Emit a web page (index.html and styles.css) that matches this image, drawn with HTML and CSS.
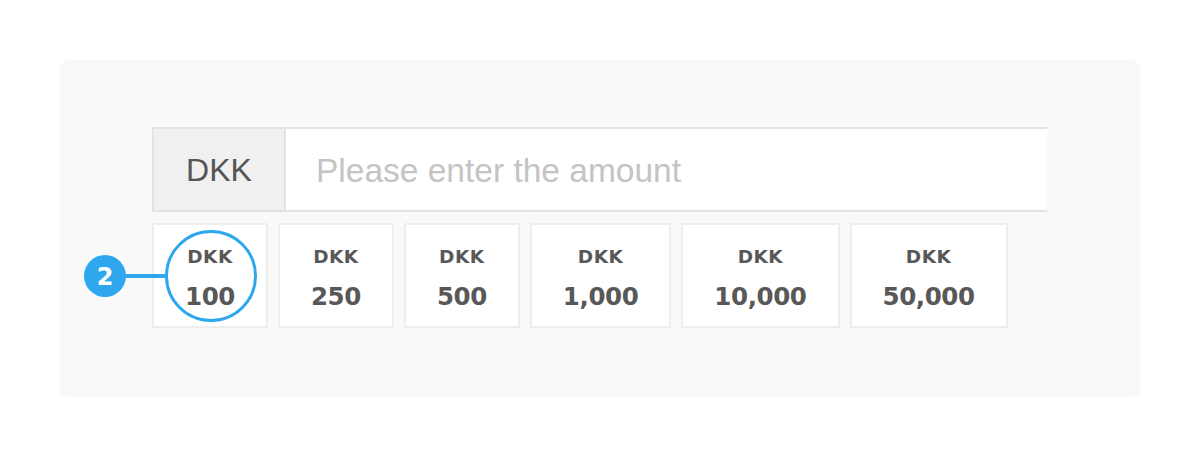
FILE: index.html
```html
<!DOCTYPE html>
<html lang="en">
<head>
<meta charset="utf-8">
<title>Amount</title>
<link rel="stylesheet" href="styles.css">
</head>
<body>
<div class="panel">
  <div class="input-group">
    <div class="currency">DKK</div>
    <div class="amount-input">Please enter the amount</div>
  </div>
  <div class="presets">
    <div class="preset"><span class="cur">DKK</span><span class="val">100</span></div>
    <div class="preset"><span class="cur">DKK</span><span class="val">250</span></div>
    <div class="preset"><span class="cur">DKK</span><span class="val">500</span></div>
    <div class="preset"><span class="cur">DKK</span><span class="val">1,000</span></div>
    <div class="preset"><span class="cur">DKK</span><span class="val">10,000</span></div>
    <div class="preset"><span class="cur">DKK</span><span class="val">50,000</span></div>
    <svg class="callout" width="190" height="100" viewBox="0 0 190 100">
      <line x1="44" y1="48" x2="86" y2="48" stroke="#2ea7ef" stroke-width="4"/>
      <circle cx="25" cy="48" r="21" fill="#2ea7ef"/>
      <text x="25" y="57" text-anchor="middle" class="badge-num">2</text>
      <circle cx="131" cy="48" r="44.5" fill="none" stroke="#2ea7ef" stroke-width="3"/>
    </svg>
  </div>
</div>
</body>
</html>
```
FILE: styles.css
```css
html, body {
  margin: 0;
  padding: 0;
  background: #ffffff;
}
body {
  width: 1200px;
  height: 457px;
  overflow: hidden;
  font-family: "Liberation Sans", Arial, sans-serif;
}
.panel {
  box-sizing: border-box;
  margin: 60px 0 0 60px;
  width: 1080px;
  height: 337px;
  background: #f9f9f9;
  border-radius: 8px;
  padding: 67px 0 0 92px;
}
.input-group {
  display: flex;
  width: 895px;
  height: 85px;
  box-sizing: border-box;
  border-top: 2px solid #e3e3e3;
  border-bottom: 2px solid #e3e3e3;
  background: #ffffff;
}
.currency {
  box-sizing: border-box;
  width: 134px;
  background: #f0f0f0;
  border-left: 2px solid #e3e3e3;
  border-right: 2px solid #e3e3e3;
  display: flex;
  align-items: center;
  justify-content: center;
  font-size: 32px;
  color: #555555;
  padding-top: 2px;
}
.amount-input {
  flex: 1;
  display: flex;
  align-items: center;
  padding-left: 30px;
  padding-top: 2px;
  font-size: 33.5px;
  color: #c4c4c4;
}
.presets {
  position: relative;
  display: flex;
  gap: 10px;
  margin-top: 11px;
}
.preset {
  box-sizing: border-box;
  height: 105px;
  padding: 3px 31px 0;
  background: #ffffff;
  border: 2px solid #eeeeee;
  display: flex;
  flex-direction: column;
  align-items: center;
  justify-content: center;
  font-family: "DejaVu Sans", sans-serif;
  font-weight: 700;
  color: #585858;
}
.cur {
  font-size: 18.5px;
  letter-spacing: 0.5px;
  line-height: 24px;
  margin-top: 3px;
}
.val {
  font-size: 24.5px;
  letter-spacing: -0.4px;
  line-height: 32px;
  margin-top: 12px;
}
.callout {
  position: absolute;
  left: -72px;
  top: 5px;
  overflow: visible;
}
.badge-num {
  font-family: "DejaVu Sans", sans-serif;
  font-weight: 700;
  font-size: 24px;
  fill: #ffffff;
}
```
